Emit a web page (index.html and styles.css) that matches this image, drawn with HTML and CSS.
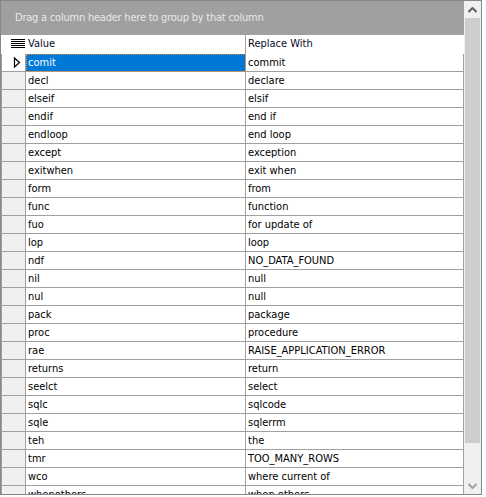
FILE: index.html
```html
<!DOCTYPE html>
<html>
<head>
<meta charset="utf-8">
<link rel="stylesheet" href="styles.css">
</head>
<body>
<div class="grid">
  <div class="main">
    <div class="group-panel">Drag a column header here to group by that column</div>
    <div class="header">
      <div class="ind ind-head">
        <svg width="14" height="11" viewBox="0 0 14 11">
          <g fill="#000">
            <rect x="0" y="0" width="14" height="1"/>
            <rect x="0" y="2" width="14" height="1"/>
            <rect x="0" y="4" width="14" height="1"/>
            <rect x="0" y="6" width="14" height="1"/>
            <rect x="0" y="8" width="14" height="1"/>
          </g>
        </svg>
      </div>
      <div class="cell c1 hcell">Value</div>
      <div class="cell c2 hcell">Replace With</div>
    </div>
    <div class="rows">
      <div class="row current">
        <div class="ind ind-cur">
          <svg width="8" height="11" viewBox="0 0 8 11"><path d="M1.5 1 L6.5 5.5 L1.5 10 Z" fill="none" stroke="#000" stroke-width="1.2"/></svg>
        </div>
        <div class="cell c1 sel">comit</div>
        <div class="cell c2">commit</div>
      </div>
      <div class="row"><div class="ind"></div><div class="cell c1">decl</div><div class="cell c2">declare</div></div>
      <div class="row"><div class="ind"></div><div class="cell c1">elseif</div><div class="cell c2">elsif</div></div>
      <div class="row"><div class="ind"></div><div class="cell c1">endif</div><div class="cell c2">end if</div></div>
      <div class="row"><div class="ind"></div><div class="cell c1">endloop</div><div class="cell c2">end loop</div></div>
      <div class="row"><div class="ind"></div><div class="cell c1">except</div><div class="cell c2">exception</div></div>
      <div class="row"><div class="ind"></div><div class="cell c1">exitwhen</div><div class="cell c2">exit when</div></div>
      <div class="row"><div class="ind"></div><div class="cell c1">form</div><div class="cell c2">from</div></div>
      <div class="row"><div class="ind"></div><div class="cell c1">func</div><div class="cell c2">function</div></div>
      <div class="row"><div class="ind"></div><div class="cell c1">fuo</div><div class="cell c2">for update of</div></div>
      <div class="row"><div class="ind"></div><div class="cell c1">lop</div><div class="cell c2">loop</div></div>
      <div class="row"><div class="ind"></div><div class="cell c1">ndf</div><div class="cell c2">NO_DATA_FOUND</div></div>
      <div class="row"><div class="ind"></div><div class="cell c1">nil</div><div class="cell c2">null</div></div>
      <div class="row"><div class="ind"></div><div class="cell c1">nul</div><div class="cell c2">null</div></div>
      <div class="row"><div class="ind"></div><div class="cell c1">pack</div><div class="cell c2">package</div></div>
      <div class="row"><div class="ind"></div><div class="cell c1">proc</div><div class="cell c2">procedure</div></div>
      <div class="row"><div class="ind"></div><div class="cell c1">rae</div><div class="cell c2">RAISE_APPLICATION_ERROR</div></div>
      <div class="row"><div class="ind"></div><div class="cell c1">returns</div><div class="cell c2">return</div></div>
      <div class="row"><div class="ind"></div><div class="cell c1">seelct</div><div class="cell c2">select</div></div>
      <div class="row"><div class="ind"></div><div class="cell c1">sqlc</div><div class="cell c2">sqlcode</div></div>
      <div class="row"><div class="ind"></div><div class="cell c1">sqle</div><div class="cell c2">sqlerrm</div></div>
      <div class="row"><div class="ind"></div><div class="cell c1">teh</div><div class="cell c2">the</div></div>
      <div class="row"><div class="ind"></div><div class="cell c1">tmr</div><div class="cell c2">TOO_MANY_ROWS</div></div>
      <div class="row"><div class="ind"></div><div class="cell c1">wco</div><div class="cell c2">where current of</div></div>
      <div class="row"><div class="ind"></div><div class="cell c1">whenothers</div><div class="cell c2">when others</div></div>
    </div>
  </div>
  <div class="vscroll">
    <div class="arrow up">
      <svg width="9" height="6" viewBox="0 0 9 6"><path d="M0.5 5 L4.5 1 L8.5 5" fill="none" stroke="#606060" stroke-width="2"/></svg>
    </div>
    <div class="track"><div class="thumb"></div></div>
    <div class="arrow down">
      <svg width="9" height="6" viewBox="0 0 9 6"><path d="M0.5 1 L4.5 5 L8.5 1" fill="none" stroke="#a0a0a0" stroke-width="2"/></svg>
    </div>
  </div>
</div>
</body>
</html>
```
FILE: styles.css
```css
html, body {
  margin: 0;
  padding: 0;
  background: #ffffff;
}
body {
  font-family: "DejaVu Sans Condensed", "DejaVu Sans", sans-serif;
  font-size: 11px;
  color: #000;
}
.grid {
  display: flex;
  width: 480px;
  height: 493px;
  border: 1px solid #828790;
  overflow: hidden;
  background: #fff;
}
.main {
  width: 463px;
  display: flex;
  flex-direction: column;
  overflow: hidden;
}
.group-panel {
  height: 34px;
  flex: none;
  background: #a0a0a0;
  color: #e8e8e8;
  padding-left: 14px;
  line-height: 34px;
  white-space: nowrap;
  letter-spacing: -0.22px;
}
.header {
  display: flex;
  height: 19px;
  flex: none;
  background: #fff;
}
.hcell {
  padding-top: 2px;
  line-height: 17px;
  color: #0a0a2a;
}
.ind {
  width: 23px;
  flex: none;
  background: #f0f0f0;
  border-left: 1px solid #a0a0a0;
  border-right: 1px solid #a0a0a0;
  border-bottom: 1px solid #a0a0a0;
}
.ind-head {
  background: #fff;
  border: none;
  width: 25px;
  display: flex;
  align-items: center;
  padding-left: 10px;
  box-sizing: border-box;
}
.ind-cur {
  background: #fff;
  display: flex;
  align-items: center;
  padding-left: 11px;
  width: 12px;
}
.rows {
  display: flex;
  flex-direction: column;
}
.row {
  display: flex;
  height: 18px;
  flex: none;
}
.cell {
  padding-left: 2px;
  padding-top: 1px;
  white-space: nowrap;
  overflow: hidden;
  border-right: 1px solid #a0a0a0;
  border-bottom: 1px solid #a0a0a0;
  line-height: 16px;
}
.c1 {
  width: 217px;
}
.c2 {
  width: 215px;
}
.header .cell {
  border-bottom: none;
}
.header .c2 {
  border-right: none;
}
.sel {
  background: #0078d7;
  color: #fff;
  outline: 1px dotted #e08a3c;
  outline-offset: -1px;
}
.vscroll {
  width: 17px;
  flex: none;
  background: #f0f0f0;
  display: flex;
  flex-direction: column;
}
.arrow {
  height: 17px;
  flex: none;
  display: flex;
  align-items: center;
  justify-content: center;
}
.track {
  flex: 1;
  display: flex;
  flex-direction: column;
}
.thumb {
  height: 425px;
  margin: 0 1px;
  background: #cdcdcd;
}
```
